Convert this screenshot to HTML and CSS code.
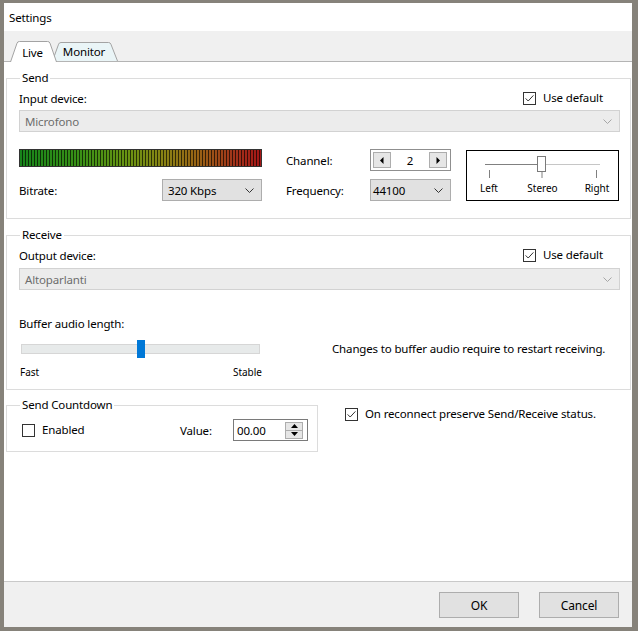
FILE: index.html
```html
<!DOCTYPE html>
<html>
<head>
<meta charset="utf-8">
<title>Settings</title>
<link rel="stylesheet" href="styles.css">
</head>
<body>
<div class="window">
  <div class="titlebar">Settings</div>
  <div class="tabstrip">
    <div class="tab tab-live">
      <svg class="tab-shape" width="47" height="21" viewBox="0 0 47 21"><path d="M0.5 21 L7 2.2 Q7.6 0.5 9.4 0.5 L37.6 0.5 Q39.4 0.5 40 2.2 L46.5 21" fill="#ffffff" stroke="#a3a3a3"/></svg>
      <span class="tab-text">Live</span>
    </div>
    <div class="tab tab-monitor">
      <svg class="tab-shape" width="66" height="19" viewBox="0 0 66 19"><path d="M0.5 19 L6.6 2.2 Q7.2 0.5 9 0.5 L56.5 0.5 Q58.3 0.5 58.9 2.2 L65.5 19" fill="#eaf5f7" stroke="#a3a3a3"/></svg>
      <span class="tab-text">Monitor</span>
    </div>
  </div>

  <div class="content">
    <fieldset class="group group-send">
      <legend>Send</legend>
      <div class="send-body">
        <div class="row-head">
          <span class="row-head-label">Input device:</span>
          <label class="check check-default">
            <svg class="box" width="13" height="13" viewBox="0 0 13 13"><rect x="0.5" y="0.5" width="12" height="12" fill="#fff" stroke="#333"/><path d="M2.6 6.4 L5.2 9 L10.4 3.4" fill="none" stroke="#333"/></svg>
            <span>Use default</span>
          </label>
        </div>
        <div class="combo combo-disabled combo-wide">
          <span>Microfono</span>
          <svg class="chev" width="9" height="5" viewBox="0 0 9 5"><path d="M0.5 0.5 L4.5 4.5 L8.5 0.5" fill="none" stroke="#a6a6a6"/></svg>
        </div>
        <div class="send-lower">
          <div class="meter-col">
            <div class="meter"></div>
            <div class="field-row bitrate-row">
              <span>Bitrate:</span>
              <div class="combo combo-bitrate">
                <span>320 Kbps</span>
                <svg class="chev" width="9" height="5" viewBox="0 0 9 5"><path d="M0.5 0.5 L4.5 4.5 L8.5 0.5" fill="none" stroke="#333"/></svg>
              </div>
            </div>
          </div>
          <div class="mid-col">
            <div class="field-row">
              <span class="mid-lbl">Channel:</span>
              <div class="spin-channel">
                <span class="spin-btn"><svg width="4" height="7" viewBox="0 0 4 7"><path d="M3.5 0 L0 3.5 L3.5 7 Z" fill="#000"/></svg></span>
                <span class="spin-val">2</span>
                <span class="spin-btn"><svg width="4" height="7" viewBox="0 0 4 7"><path d="M0.5 0 L4 3.5 L0.5 7 Z" fill="#000"/></svg></span>
              </div>
            </div>
            <div class="field-row freq-row">
              <span class="mid-lbl">Frequency:</span>
              <div class="combo combo-freq">
                <span>44100</span>
                <svg class="chev" width="9" height="5" viewBox="0 0 9 5"><path d="M0.5 0.5 L4.5 4.5 L8.5 0.5" fill="none" stroke="#333"/></svg>
              </div>
            </div>
          </div>
          <div class="panbox">
            <svg width="151" height="49" viewBox="0 0 151 49">
              <line x1="18" y1="13.5" x2="71" y2="13.5" stroke="#808080"/>
              <line x1="79" y1="13.5" x2="133" y2="13.5" stroke="#c6c6c6"/>
              <line x1="22.5" y1="19" x2="22.5" y2="27" stroke="#808080"/>
              <line x1="75" y1="21" x2="75" y2="27" stroke="#808080"/>
              <line x1="129.5" y1="19" x2="129.5" y2="27" stroke="#808080"/>
              <rect x="70.5" y="5.5" width="8" height="15" fill="#fff" stroke="#7a7a7a"/>
              <text class="pan-text" x="22" y="40.5" text-anchor="middle">Left</text>
              <text class="pan-text" x="75.5" y="40.5" text-anchor="middle">Stereo</text>
              <text class="pan-text" x="130" y="40.5" text-anchor="middle">Right</text>
            </svg>
          </div>
        </div>
      </div>
    </fieldset>

    <fieldset class="group group-recv">
      <legend>Receive</legend>
      <div class="recv-body">
        <div class="row-head">
          <span class="row-head-label">Output device:</span>
          <label class="check check-default">
            <svg class="box" width="13" height="13" viewBox="0 0 13 13"><rect x="0.5" y="0.5" width="12" height="12" fill="#fff" stroke="#333"/><path d="M2.6 6.4 L5.2 9 L10.4 3.4" fill="none" stroke="#333"/></svg>
            <span>Use default</span>
          </label>
        </div>
        <div class="combo combo-disabled combo-wide recv-combo">
          <span>Altoparlanti</span>
          <svg class="chev" width="9" height="5" viewBox="0 0 9 5"><path d="M0.5 0.5 L4.5 4.5 L8.5 0.5" fill="none" stroke="#a6a6a6"/></svg>
        </div>
        <div class="buffer-lbl">Buffer audio length:</div>
        <div class="buffer-row">
          <div class="hslider">
            <div class="hslider-track"></div>
            <div class="hslider-thumb"></div>
          </div>
          <span class="buffer-note">Changes to buffer audio require to restart receiving.</span>
        </div>
        <div class="scale-labels"><span>Fast</span><span>Stable</span></div>
      </div>
    </fieldset>

    <div class="bottom-row">
      <fieldset class="group group-countdown">
        <legend>Send Countdown</legend>
        <div class="cd-body">
          <label class="check check-enabled">
            <svg class="box" width="13" height="13" viewBox="0 0 13 13"><rect x="0.5" y="0.5" width="12" height="12" fill="#fff" stroke="#333"/></svg>
            <span>Enabled</span>
          </label>
          <span class="value-lbl">Value:</span>
          <div class="numeric">
            <span class="numeric-val">00.00</span>
            <div class="num-btns">
              <span class="num-btn"><svg width="7" height="4" viewBox="0 0 7 4"><path d="M0 4 L3.5 0 L7 4 Z" fill="#000"/></svg></span>
              <span class="num-btn"><svg width="7" height="4" viewBox="0 0 7 4"><path d="M0 0 L7 0 L3.5 4 Z" fill="#000"/></svg></span>
            </div>
          </div>
        </div>
      </fieldset>
      <label class="check check-preserve">
        <svg class="box" width="13" height="13" viewBox="0 0 13 13"><rect x="0.5" y="0.5" width="12" height="12" fill="#fff" stroke="#333"/><path d="M2.6 6.4 L5.2 9 L10.4 3.4" fill="none" stroke="#333"/></svg>
        <span>On reconnect preserve Send/Receive status.</span>
      </label>
    </div>
  </div>

  <div class="footer">
    <button class="btn">OK</button>
    <button class="btn">Cancel</button>
  </div>
</div>
</body>
</html>
```

FILE: styles.css
```css
* { box-sizing: border-box; }
html, body { margin: 0; padding: 0; }
body {
  background: #86827a;
  font-family: "Noto Sans", "Open Sans", sans-serif;
  font-size: 11.5px;
  letter-spacing: -0.15px;
  color: #000;
}
.window {
  width: 638px;
  height: 631px;
  border-style: solid;
  border-color: #86827a;
  border-width: 3px 6px 4px 4px;
  background: #fff;
  display: flex;
  flex-direction: column;
}
.titlebar {
  height: 28px;
  padding-left: 5px;
  display: flex;
  align-items: center;
  background: #fff;
}
.tabstrip {
  height: 31px;
  background: #f0f0f0;
  border-bottom: 1px solid #b4b4b4;
  display: flex;
  align-items: flex-end;
  padding-left: 6px;
}
.tab {
  position: relative;
  display: flex;
  justify-content: center;
  align-items: center;
}
.tab-shape { position: absolute; left: 0; top: 0; }
.tab-text { position: relative; line-height: 16px; }
.tab-live { width: 47px; height: 21px; margin-bottom: -1px; z-index: 2; padding: 2px 2px 0 0; }
.tab-monitor { width: 66px; height: 19px; margin-left: -5px; z-index: 1; padding-right: 2px; }

.content {
  flex: 1;
  display: flex;
  flex-direction: column;
  padding: 0 1px 0 2px;
  background: #fff;
}
.group {
  border: 1px solid #dcdcdc;
  margin: 0;
  padding: 0;
  min-width: 0;
}
.group legend {
  margin-left: 13px;
  padding: 0 2px;
  line-height: 16px;
}
.group-send { margin-top: 8px; }
.send-body { padding: 4px 10px 17px 12px; }
.recv-body { padding: 4px 10px 11px 12px; }
.group-recv { margin-top: 8px; }

.row-head {
  display: flex;
  align-items: center;
  height: 16px;
}
.row-head-label { flex: 1; }
.check {
  display: inline-flex;
  align-items: center;
  gap: 7px;
  line-height: 16px;
  white-space: nowrap;
}
.check .box { flex: none; }
.check-default { width: 97px; }

.combo {
  height: 22px;
  display: flex;
  align-items: center;
  justify-content: space-between;
  background: #e1e1e1;
  border: 1px solid #adadad;
  padding: 0 7px 0 5px;
}
.combo-wide { margin-top: 4px; }
.combo-disabled {
  background: #ececec;
  border-color: #d2d2d2;
  color: #6d6d6d;
}
.recv-combo { margin-top: 5px; }

.send-lower {
  display: flex;
  align-items: flex-start;
  margin-top: 17px;
}
.meter-col { width: 243px; }
.meter {
  height: 18px;
  border: 1px solid #333;
  background:
    repeating-linear-gradient(90deg, rgba(0,0,0,0) 0 2px, rgba(0,0,0,0.65) 2px 3px),
    linear-gradient(90deg, #17841a 0%, #3a9116 25%, #6a9412 45%, #8a8214 60%, #9a6015 75%, #a2361a 88%, #a61616 100%);
}
.field-row {
  display: flex;
  align-items: center;
  height: 22px;
}
.bitrate-row { margin-top: 12px; justify-content: space-between; }
.combo-bitrate { width: 100px; }
.mid-col { width: 165px; margin-left: 24px; }
.mid-lbl { width: 84px; }
.freq-row { margin-top: 8px; }
.combo-freq { width: 81px; padding-left: 2px; }

.spin-channel {
  width: 81px;
  height: 22px;
  border: 1px solid #8f8f8f;
  display: flex;
  align-items: center;
  justify-content: space-between;
  padding: 0 3px 0 2px;
}
.spin-btn {
  width: 18px;
  height: 16px;
  background: #e6e6e6;
  border: 1px solid #adadad;
  display: flex;
  align-items: center;
  justify-content: center;
}
.spin-val { flex: 1; text-align: center; }

.panbox {
  width: 153px;
  height: 51px;
  margin: 1px 0 0 15px;
  border: 1px solid #000;
  background: #fff;
}
.panbox svg { display: block; }
.pan-text { font-size: 10px; fill: #000; letter-spacing: 0; }

.buffer-lbl { margin-top: 26px; line-height: 16px; }
.buffer-row {
  display: flex;
  align-items: center;
  margin-top: 8px;
  height: 18px;
}
.hslider {
  position: relative;
  width: 239px;
  height: 18px;
  margin-left: 2px;
  display: flex;
  align-items: center;
  flex: none;
}
.hslider-track {
  width: 100%;
  height: 10px;
  background: #e7eaea;
  border: 1px solid #d6d6d6;
}
.hslider-thumb {
  position: absolute;
  left: 116px;
  top: 0;
  width: 8px;
  height: 18px;
  background: #0078d7;
}
.buffer-note { margin-left: 72px; line-height: 16px; white-space: nowrap; }
.scale-labels {
  display: flex;
  justify-content: space-between;
  width: 243px;
  margin-top: 8px;
  padding-left: 1px;
  font-size: 10px;
  letter-spacing: 0;
  line-height: 12px;
}

.bottom-row {
  display: flex;
  align-items: flex-start;
  margin-top: 7px;
}
.group-countdown { width: 312px; flex: none; }
.cd-body {
  display: flex;
  align-items: center;
  padding: 6px 9px 10px 15px;
}
.check-enabled { width: 158px; }
.value-lbl { width: 53px; }
.numeric {
  width: 75px;
  height: 22px;
  border: 1px solid #7a7a7a;
  display: flex;
  align-items: center;
  justify-content: space-between;
  padding: 0 4px 0 3px;
  background: #fff;
}
.num-btns { display: flex; flex-direction: column; }
.num-btn {
  width: 18px;
  height: 9px;
  background: #e6e6e6;
  border: 1px solid #adadad;
  display: flex;
  align-items: center;
  justify-content: center;
}
.num-btn + .num-btn { border-top: none; height: 8px; }
.check-preserve { margin: 9px 0 0 27px; }

.footer {
  height: 46px;
  background: #f0f0f0;
  border-top: 1px solid #c9c9c9;
  display: flex;
  justify-content: flex-end;
  align-items: flex-start;
  gap: 20px;
  padding: 10px 13px 0 0;
}
.btn {
  width: 80px;
  height: 26px;
  background: #e1e1e1;
  border: 1px solid #adadad;
  font-family: inherit;
  font-size: 12px;
  letter-spacing: -0.15px;
  color: #000;
  padding: 0;
  border-radius: 0;
}
```
